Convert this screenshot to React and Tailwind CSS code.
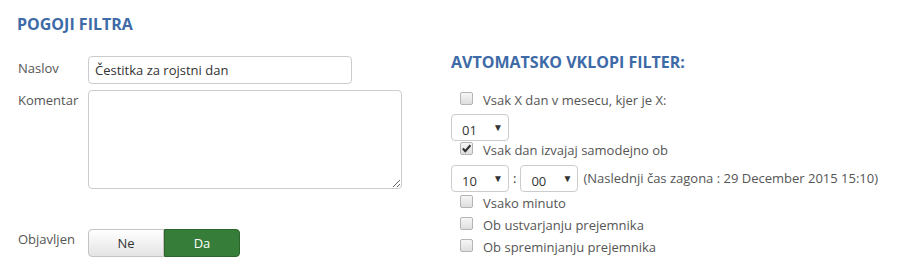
import React from "react";

const Checkbox = ({ checked }) => (
  <span className="mt-[2px] ml-[10px] flex h-[13px] w-[13px] shrink-0 items-center justify-center rounded-[2px] border border-[#b4b4b4] bg-gradient-to-b from-[#f6f6f6] to-[#dedede]">
    {checked && (
      <svg width="11" height="11" viewBox="0 0 11 11">
        <path d="M1.8 5.6 L4.3 8.1 L9.4 2.2" fill="none" stroke="#333" strokeWidth="2.1" />
      </svg>
    )}
  </span>
);

const CheckRow = ({ label, checked, className = "" }) => (
  <div className={`flex items-start leading-[20px] ${className}`}>
    <Checkbox checked={checked} />
    <span className="ml-[10px] text-[#555]">{label}</span>
  </div>
);

const Select = ({ value }) => (
  <div className="flex h-[27px] w-[58px] items-start justify-between rounded-[4px] border border-[#ccc] bg-white pl-[10px] pr-[5px] text-[#333]">
    <span className="pt-[5px] leading-[20px]">{value}</span>
    <span className="pt-[7px] text-[10px] leading-[10px] text-[#333]">▼</span>
  </div>
);

export default function App() {
  return (
    <div className="flex h-[277px] w-[899px] bg-white font-['Open_Sans',sans-serif] text-[13px] text-[#555]">
      {/* Left: filter conditions */}
      <div className="w-[450px] pl-[17px] pt-[12px]">
        <h2 className="text-[16px] font-bold leading-[24px] text-[#3e6aa7]">POGOJI FILTRA</h2>

        <div className="mt-[20px] flex items-start">
          <label className="w-[71px] pl-[1px] pt-[2px] leading-[20px]">Naslov</label>
          <input
            readOnly
            value="Čestitka za rojstni dan"
            className="h-[28px] w-[264px] rounded-[4px] border border-[#ccc] px-[6px] text-[13px] text-[#333] outline-none"
          />
        </div>

        <div className="mt-[6px] flex items-start">
          <label className="w-[71px] pl-[1px] leading-[20px]">Komentar</label>
          <textarea
            readOnly
            className="h-[99px] w-[314px] rounded-[4px] border border-[#ccc] outline-none"
          />
        </div>

        <div className="mt-[40px] flex items-start">
          <label className="w-[71px] pl-[1px] leading-[20px]">Objavljen</label>
          <div className="flex h-[28px]">
            <button className="flex w-[76px] items-center justify-center rounded-l-[4px] border border-[#c4c4c4] bg-gradient-to-b from-white to-[#e4e4e4] pt-[2px] text-[13px] text-[#333]">
              Ne
            </button>
            <button className="flex w-[76px] items-center justify-center rounded-r-[4px] border border-[#2b652d] bg-[#357d38] pt-[2px] text-[13px] text-white">
              Da
            </button>
          </div>
        </div>
      </div>

      {/* Right: auto enable */}
      <div className="flex-1 pt-[50px]">
        <h2 className="pl-[1px] text-[16px] font-bold leading-[24px] text-[#3e6aa7]">AVTOMATSKO VKLOPI FILTER:</h2>

        <CheckRow className="mt-[16px]" label="Vsak X dan v mesecu, kjer je X:" />
        <div className="mt-[4px] pl-[1px]">
          <Select value="01" />
        </div>
        <CheckRow className="-mt-[1px]" checked label="Vsak dan izvajaj samodejno ob" />

        <div className="mt-[5px] flex items-center pl-[1px]">
          <Select value="10" />
          <span className="mx-[4px] text-[#333]">:</span>
          <Select value="00" />
          <span className="ml-[5px] text-[#555]">(Naslednji čas zagona : 29 December 2015 15:10)</span>
        </div>

        <CheckRow className="h-[22px] pt-[1px]" label="Vsako minuto" />
        <CheckRow className="h-[22px] pt-[1px]" label="Ob ustvarjanju prejemnika" />
        <CheckRow className="h-[23px] pt-[1px]" label="Ob spreminjanju prejemnika" />
      </div>
    </div>
  );
}
